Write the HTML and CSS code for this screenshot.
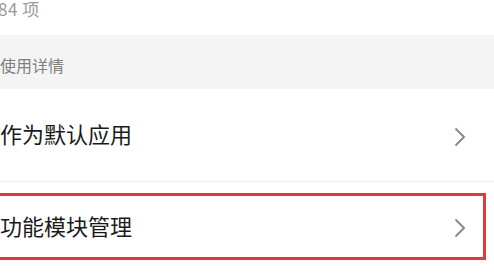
FILE: index.html
```html
<!DOCTYPE html>
<html lang="zh">
<head>
<meta charset="utf-8">
<link rel="stylesheet" href="styles.css">
</head>
<body>
<div class="page">
  <div class="top"><span class="count">84 项</span></div>
  <div class="section">使用详情</div>
  <div class="row">
    <span class="label">作为默认应用</span>
    <svg class="chev" width="12" height="20" viewBox="0 0 12 20"><polyline points="1.5,1.5 10,10 1.5,18.5" fill="none" stroke="#8a8a8a" stroke-width="2"/></svg>
  </div>
  <div class="row row-last">
    <span class="label">功能模块管理</span>
    <svg class="chev" width="12" height="20" viewBox="0 0 12 20"><polyline points="1.5,1.5 10,10 1.5,18.5" fill="none" stroke="#8a8a8a" stroke-width="2"/></svg>
    <div class="highlight"></div>
  </div>
</div>
</body>
</html>
```
FILE: styles.css
```css
html, body {
  margin: 0;
  padding: 0;
  background: #ffffff;
}
body {
  font-family: "Noto Sans CJK SC", "Noto Sans", sans-serif;
  width: 494px;
  height: 276px;
  overflow: hidden;
}
.page {
  display: flex;
  flex-direction: column;
}
.top {
  height: 35px;
  display: flex;
  align-items: flex-start;
}
.count {
  font-size: 17px;
  line-height: 17px;
  color: #9a9a9a;
  margin-left: -2px;
  margin-top: 0;
  letter-spacing: 0.5px;
}
.section {
  height: 54px;
  background: #f4f4f4;
  color: #808080;
  font-size: 16px;
  line-height: 16px;
  box-sizing: border-box;
  padding-top: 22px;
}
.row {
  position: relative;
  height: 92px;
  display: flex;
  align-items: center;
  justify-content: space-between;
  padding-right: 28px;
  border-bottom: 1px solid #ececec;
}
.row-last {
  border-bottom: none;
  height: 94px;
}
.label {
  font-size: 22px;
  line-height: 22px;
  color: #1a1a1a;
  margin-bottom: 5px;
}
.row-last .label {
  margin-bottom: 9px;
}
.chev {
  display: block;
}
.row .chev { margin-top: 3px; }
.row-last .chev { margin-top: -2px; }
.highlight {
  position: absolute;
  left: -6px;
  top: 11px;
  width: 492px;
  height: 67px;
  box-sizing: border-box;
  border: 3px solid #e0393b;
}
```
